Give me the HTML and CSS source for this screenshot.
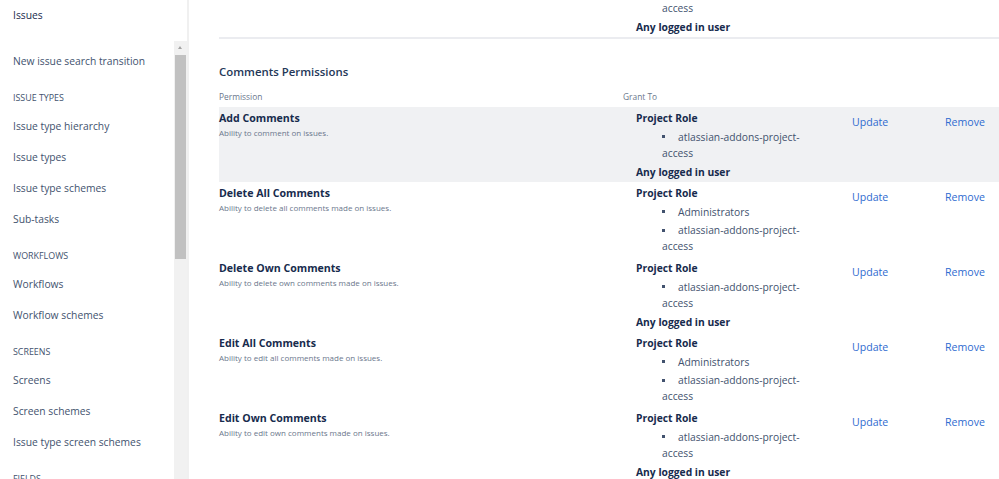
FILE: index.html
```html
<!DOCTYPE html>
<html>
<head>
<meta charset="utf-8">
<link rel="stylesheet" href="styles.css">
</head>
<body>
<div class="page">
  <aside class="sidebar">
    <div class="side-head">Issues</div>
    <div class="side-scroll">
      <nav class="side-list">
        <a class="side-item">New issue search transition</a>
        <div class="side-heading">ISSUE TYPES</div>
        <a class="side-item">Issue type hierarchy</a>
        <a class="side-item">Issue types</a>
        <a class="side-item">Issue type schemes</a>
        <a class="side-item">Sub-tasks</a>
        <div class="side-heading">WORKFLOWS</div>
        <a class="side-item">Workflows</a>
        <a class="side-item">Workflow schemes</a>
        <div class="side-heading">SCREENS</div>
        <a class="side-item">Screens</a>
        <a class="side-item">Screen schemes</a>
        <a class="side-item">Issue type screen schemes</a>
        <div class="side-heading">FIELDS</div>
        <a class="side-item">Custom fields</a>
      </nav>
      <div class="scrollbar">
        <div class="sb-arrow"></div>
        <div class="sb-thumb"></div>
        <div class="sb-track"></div>
      </div>
    </div>
  </aside>
  <main class="main">
    <div class="prev-table">
      <div class="row row-prev">
        <div class="perm"></div>
        <div class="grant">
          <div class="cont">access</div>
          <div class="anyone">Any logged in user</div>
        </div>
        <div class="act"></div>
        <div class="act"></div>
      </div>
    </div>

    <h2 class="section-title">Comments Permissions</h2>
    <div class="table">
      <div class="row head">
        <div>Permission</div>
        <div>Grant To</div>
        <div></div>
        <div></div>
      </div>

      <div class="row shaded">
        <div class="perm">
          <div class="ptitle">Add Comments</div>
          <div class="pdesc">Ability to comment on issues.</div>
        </div>
        <div class="grant">
          <div class="role">Project Role</div>
          <ul class="roles">
            <li>atlassian-addons-project-access</li>
          </ul>
          <div class="anyone">Any logged in user</div>
        </div>
        <div class="act"><a class="link">Update</a></div>
        <div class="act"><a class="link">Remove</a></div>
      </div>

      <div class="row">
        <div class="perm">
          <div class="ptitle">Delete All Comments</div>
          <div class="pdesc">Ability to delete all comments made on issues.</div>
        </div>
        <div class="grant">
          <div class="role">Project Role</div>
          <ul class="roles">
            <li>Administrators</li>
            <li>atlassian-addons-project-access</li>
          </ul>
        </div>
        <div class="act"><a class="link">Update</a></div>
        <div class="act"><a class="link">Remove</a></div>
      </div>

      <div class="row">
        <div class="perm">
          <div class="ptitle">Delete Own Comments</div>
          <div class="pdesc">Ability to delete own comments made on issues.</div>
        </div>
        <div class="grant">
          <div class="role">Project Role</div>
          <ul class="roles">
            <li>atlassian-addons-project-access</li>
          </ul>
          <div class="anyone">Any logged in user</div>
        </div>
        <div class="act"><a class="link">Update</a></div>
        <div class="act"><a class="link">Remove</a></div>
      </div>

      <div class="row">
        <div class="perm">
          <div class="ptitle">Edit All Comments</div>
          <div class="pdesc">Ability to edit all comments made on issues.</div>
        </div>
        <div class="grant">
          <div class="role">Project Role</div>
          <ul class="roles">
            <li>Administrators</li>
            <li>atlassian-addons-project-access</li>
          </ul>
        </div>
        <div class="act"><a class="link">Update</a></div>
        <div class="act"><a class="link">Remove</a></div>
      </div>

      <div class="row">
        <div class="perm">
          <div class="ptitle">Edit Own Comments</div>
          <div class="pdesc">Ability to edit own comments made on issues.</div>
        </div>
        <div class="grant">
          <div class="role">Project Role</div>
          <ul class="roles">
            <li>atlassian-addons-project-access</li>
          </ul>
          <div class="anyone">Any logged in user</div>
        </div>
        <div class="act"><a class="link">Update</a></div>
        <div class="act"><a class="link">Remove</a></div>
      </div>
    </div>
  </main>
</div>
</body>
</html>
```
FILE: styles.css
```css
* { box-sizing: border-box; }
html, body { margin: 0; padding: 0; height: 100%; overflow: hidden; background: #fff; }
body { font-family: "Open Sans", "Noto Sans", sans-serif; color: #172b4d; }

.page { display: flex; height: 479px; overflow: hidden; }

.sidebar {
  width: 189px;
  flex: none;
  display: flex;
  flex-direction: column;
  border-right: 2px solid #f0f0f0;
  background: #fff;
}
.side-head {
  height: 41px;
  line-height: 30px;
  padding-left: 13px;
  font-size: 10.3px;
  color: #172b4d;
}
.side-scroll { flex: 1; display: flex; min-height: 0; }
.side-list {
  flex: 1;
  display: flex;
  flex-direction: column;
  padding-top: 4.5px;
  overflow: hidden;
}
.side-item {
  flex: none;
  height: 31px;
  line-height: 31px;
  padding-left: 13px;
  font-size: 10.3px;
  color: #42526e;
  white-space: nowrap;
}
.side-heading {
  flex: none;
  height: 34px;
  padding: 15px 0 7px 13px;
  line-height: 12px;
  font-size: 8.9px;
  color: #42526e;
  white-space: nowrap;
}
.scrollbar {
  width: 13px;
  flex: none;
  display: flex;
  flex-direction: column;
  background: #f1f1f1;
}
.sb-arrow {
  height: 14px;
  position: relative;
}
.sb-arrow::after {
  content: "";
  position: absolute;
  left: 4px;
  top: 5px;
  border-left: 2.5px solid transparent;
  border-right: 2.5px solid transparent;
  border-bottom: 3px solid #a3a3a3;
}
.sb-thumb { height: 204px; margin: 0 1px; background: #c1c1c1; }
.sb-track { flex: 1; }

.main {
  flex: 1;
  min-width: 0;
  padding-left: 30px;
  overflow: hidden;
}

.row {
  display: grid;
  grid-template-columns: 404px 217px 93px 66px;
  width: 780px;
}
.prev-table { border-bottom: 2px solid #ebecf0; width: 780px; }
.row-prev { padding-bottom: 1px; }

.section-title {
  margin: 25px 0 8px;
  font-size: 11.4px;
  font-weight: 600;
  line-height: 16px;
  color: #253858;
}
.head {
  height: 19px;
  font-size: 8.4px;
  color: #6b778c;
  line-height: 18px;
}

.table .row:not(.head) { height: 75px; }
.shaded { background: #f0f1f3; }

.perm { padding-top: 3px; }
.ptitle {
  font-size: 10.6px;
  font-weight: 700;
  line-height: 16px;
  color: #172b4d;
}
.pdesc {
  margin-top: 2px;
  font-size: 8px;
  line-height: 10px;
  color: #6b778c;
}

.grant {
  padding: 3px 10px 1px 13px;
  font-size: 10.3px;
  line-height: 16px;
  color: #42526e;
}
.row-prev .grant { padding-top: 0; }
.role, .anyone { font-weight: 700; color: #172b4d; }
.anyone { margin-top: 3px; }
.cont { margin-left: 26px; }
.roles { list-style: none; margin: 0; padding: 0 0 0 26px; }
.roles li { margin-top: 2.5px; }
.roles li::before {
  content: "";
  display: inline-block;
  width: 3px;
  height: 3px;
  background: #42526e;
  vertical-align: middle;
  margin: -2px 13px 0 0;
}

.act {
  padding: 7px 0 0 12px;
  font-size: 10.6px;
  line-height: 16px;
}
.link {
  color: #2f6bd0;
  font-weight: 500;
}
```
